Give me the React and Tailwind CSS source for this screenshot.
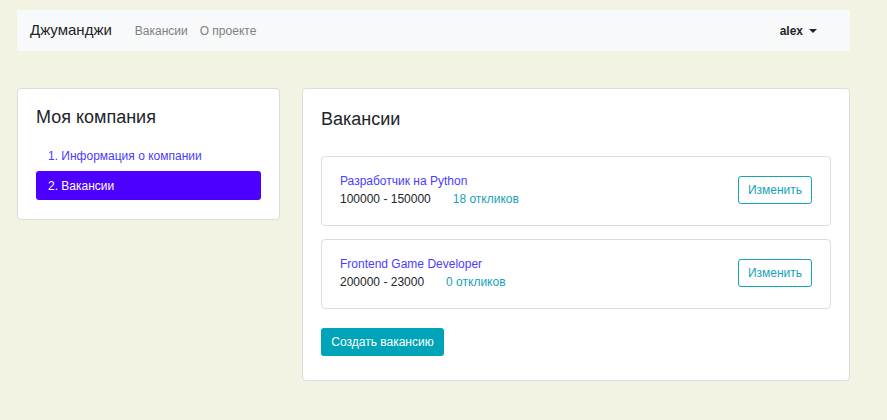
import React from "react";

const font = { fontFamily: '"Liberation Sans", Arial, sans-serif' };

function Vacancy({ title, salary, responses }) {
  return (
    <div className="flex items-center justify-between rounded-[4px] border border-[#dcdcdc] bg-white pl-[18px] pr-[18px] pt-[15px] pb-[17px]">
      <div className="text-[12px] leading-[18px]">
        <div className="text-[#4a3cff]">{title}</div>
        <div className="flex text-[#212529]">
          <span>{salary}</span>
          <span className="ml-[22px] text-[#17a2b8]">{responses}</span>
        </div>
      </div>
      <button className="h-[28px] w-[74px] rounded-[3px] border border-[#17a2b8] bg-white text-[12px] text-[#17a2b8]">
        Изменить
      </button>
    </div>
  );
}

export default function App() {
  return (
    <div className="min-h-[420px] w-full bg-[#f3f3e4] pt-[10px]" style={font}>
      <nav className="ml-[17px] flex h-[41px] w-[833px] items-center bg-[#f8f9fa] pl-[13px] pr-[33px]">
        <span className="text-[15px] text-[#212529]">Джуманджи</span>
        <div className="ml-[23px] flex gap-[12px] text-[12px] text-[#808080]">
          <span>Вакансии</span>
          <span>О проекте</span>
        </div>
        <div className="ml-auto flex items-center text-[12px] font-bold text-[#212529]">
          alex
          <span className="ml-[6px] h-0 w-0 border-x-[4px] border-t-[4px] border-x-transparent border-t-[#212529]" />
        </div>
      </nav>

      <div className="mt-[37px] ml-[17px] flex items-start gap-[22px]">
        <div className="w-[263px] rounded-[4px] border border-[#dcdcdc] bg-white px-[18px] pt-[17px] pb-[19px]">
          <h4 className="text-[18px] leading-[22px] text-[#212529]">Моя компания</h4>
          <div className="mt-[13px] text-[12px]">
            <div className="flex h-[30px] items-center px-[12px] text-[#4a3cff]">
              1. Информация о компании
            </div>
            <div className="flex h-[29px] items-center rounded-[3px] bg-[#4c00ff] px-[12px] text-white">
              2. Вакансии
            </div>
          </div>
        </div>

        <div className="w-[548px] rounded-[4px] border border-[#dcdcdc] bg-white px-[18px] pt-[19px] pb-[24px]">
          <h4 className="text-[18px] leading-[22px] text-[#212529]">Вакансии</h4>
          <div className="mt-[26px] flex flex-col gap-[13px]">
            <Vacancy title="Разработчик на Python" salary="100000 - 150000" responses="18 откликов" />
            <Vacancy title="Frontend Game Developer" salary="200000 - 23000" responses="0 откликов" />
          </div>
          <button className="mt-[19px] h-[28px] w-[123px] rounded-[3px] bg-[#00a4b8] text-[12px] text-white">
            Создать вакансию
          </button>
        </div>
      </div>
    </div>
  );
}
